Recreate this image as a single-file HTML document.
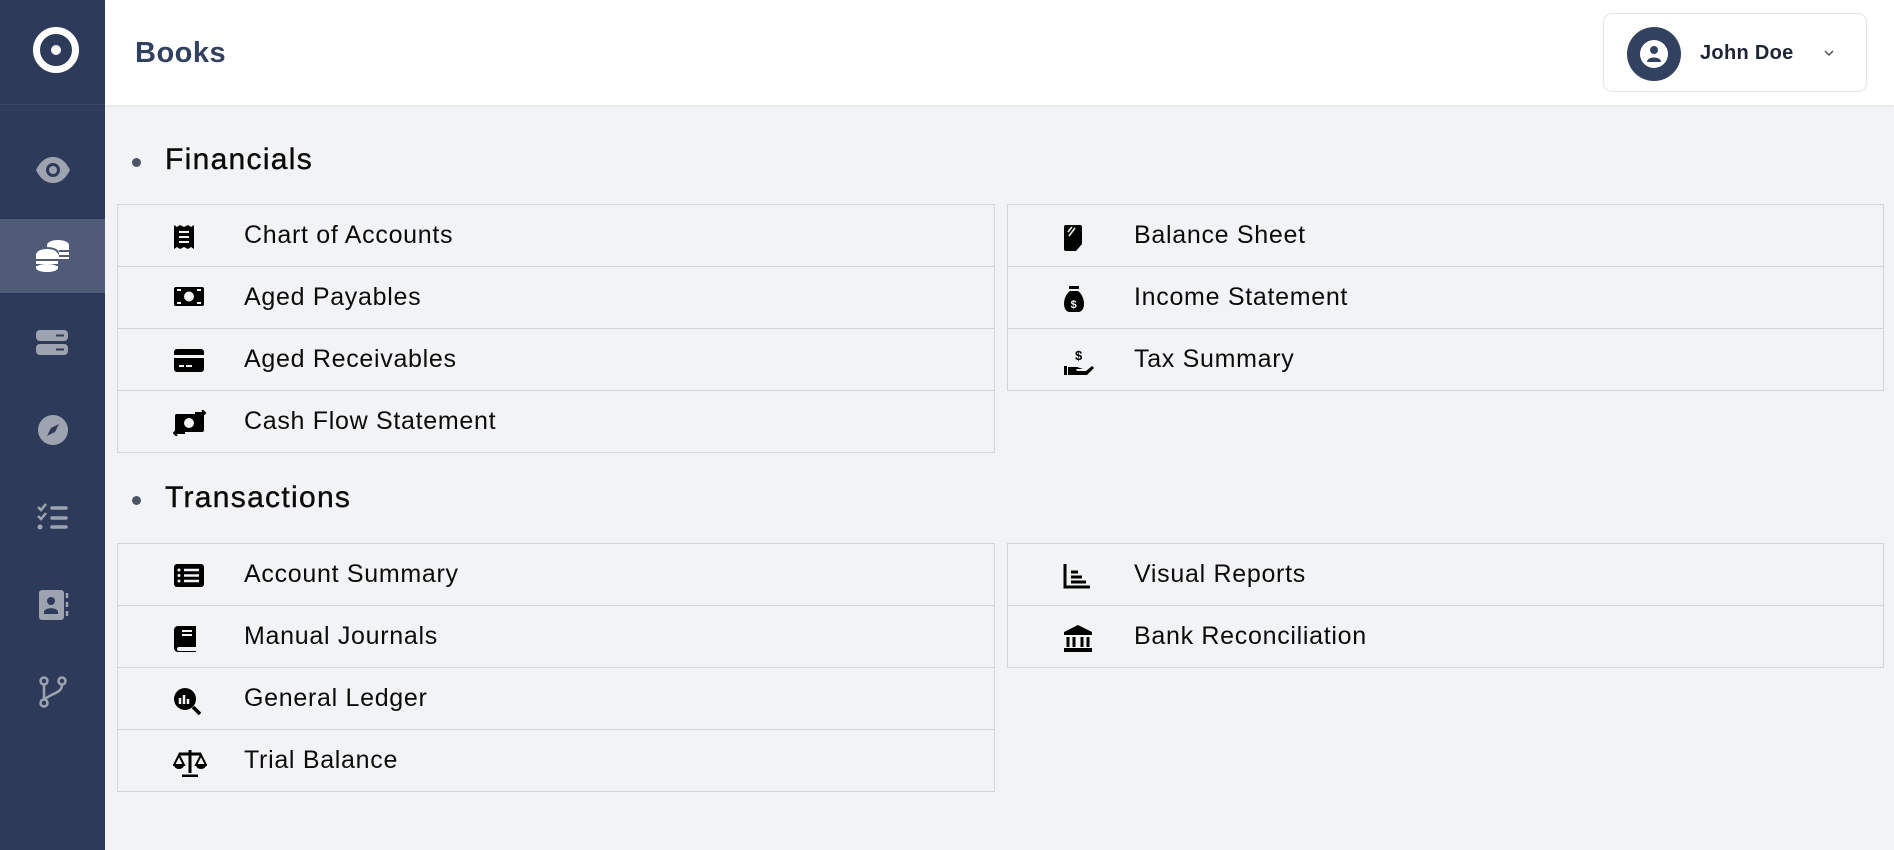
<!DOCTYPE html>
<html><head><meta charset="utf-8"><style>
*{margin:0;padding:0;box-sizing:border-box}
body{width:1894px;height:850px;background:#f2f3f5;font-family:"Liberation Sans",sans-serif;position:relative;overflow:hidden;color:#0b0b0b}
#side{position:absolute;left:0;top:0;width:105px;height:850px;background:#2e3a59}
#side .logo{position:absolute;left:0;top:0;width:105px;height:105px;border-bottom:1px solid #3f4a68}
#side .act{position:absolute;left:0;top:219px;width:105px;height:74px;background:#505b78}
#side svg{position:absolute}
#head{position:absolute;left:105px;top:0;right:0;height:105px;background:#fff;box-shadow:0 1px 3px rgba(0,0,0,.08)}
#head h1{position:absolute;left:30px;top:37px;font-size:29px;font-weight:bold;color:#334160;letter-spacing:.5px}
.user{position:absolute;left:1498px;top:13px;width:264px;height:79px;border:1px solid #e3e5ea;border-radius:9px}
.av{position:absolute;left:23px;top:13px;width:54px;height:54px;border-radius:50%;background:#334160}
.user .nm{position:absolute;left:96px;top:28px;font-size:20px;font-weight:bold;color:#1d2433;letter-spacing:.3px}
.sec{position:absolute;left:136px;font-size:30px;letter-spacing:1.3px;-webkit-text-stroke:.4px #0b0b0b}
.sec:before{content:"";position:absolute;left:-4px;top:15px;width:9px;height:9px;border-radius:50%;background:#4b5568}
.sec span{position:absolute;left:29px;top:0;white-space:nowrap}
.row{position:absolute;height:63px;border:1px solid #d4d5db;background:#f2f3f5;font-size:25px;letter-spacing:.7px}
.row .t{position:absolute;top:16px;white-space:nowrap}
.row svg{position:absolute;top:19px}
.L{left:117px;width:878px}.L .t{left:126px}.L svg{left:55px}
.R{left:1007px;width:877px}.R .t{left:126px}.R svg{left:55px}
</style></head><body>
<div id="side">
<div class="logo"><svg style="left:33px;top:27px" width="46" height="46" viewBox="0 0 46 46"><circle cx="23" cy="23" r="19.5" fill="none" stroke="#fff" stroke-width="7"/><circle cx="23" cy="23" r="5" fill="#fff"/></svg></div>
<svg style="left:35px;top:155px" width="36" height="30" viewBox="0 0 36 30"><path d="M1 15C6 5 12 2 18 2s12 3 17 13c-5 10-11 13-17 13S6 25 1 15z" fill="#9ea3b0"/><circle cx="18" cy="15" r="7" fill="#2e3a59"/><circle cx="18" cy="15" r="4" fill="#9ea3b0"/></svg>
<div class="act"></div>
<svg style="left:36px;top:239px" width="34" height="34" viewBox="0 0 34 34"><ellipse cx="22" cy="6" rx="11" ry="5" fill="#fff"/><rect x="11" y="6" width="22" height="14" fill="#fff"/><path d="M23 12h10M23 17h10" stroke="#505b78" stroke-width="2"/><ellipse cx="11" cy="14" rx="11" ry="5" fill="#fff" stroke="#505b78" stroke-width="2"/><rect x="0" y="14" width="22" height="14" fill="#fff"/><path d="M0 21h22M0 26h22" stroke="#505b78" stroke-width="2"/><ellipse cx="11" cy="29" rx="11" ry="4" fill="#fff"/></svg>
<svg style="left:36px;top:330px" width="32" height="26" viewBox="0 0 32 26"><rect x="0" y="0" width="32" height="11" rx="4" fill="#9ea3b0"/><rect x="0" y="14" width="32" height="11" rx="4" fill="#9ea3b0"/><path d="M20 5.5h8M20 19.5h8" stroke="#2e3a59" stroke-width="2"/></svg>
<svg style="left:37px;top:414px" width="32" height="32" viewBox="0 0 32 32"><circle cx="16" cy="16" r="15" fill="#9ea3b0"/><path d="M22 10l-4 8-8 4 4-8z" fill="#2e3a59"/></svg>
<svg style="left:36px;top:503px" width="32" height="28" viewBox="0 0 32 28"><path d="M2 4l3 3 5-6M2 13l3 3 5-6" stroke="#9ea3b0" stroke-width="2.5" fill="none"/><circle cx="4" cy="24" r="2.5" fill="#9ea3b0"/><path d="M16 5h14M16 15h14M16 24h14" stroke="#9ea3b0" stroke-width="3.5" stroke-linecap="round"/></svg>
<svg style="left:39px;top:589px" width="30" height="32" viewBox="0 0 30 32"><rect x="0" y="1" width="25" height="30" rx="3" fill="#9ea3b0"/><circle cx="12" cy="12" r="4" fill="#2e3a59"/><path d="M5 23c0-5 14-5 14 0v2H5z" fill="#2e3a59"/><path d="M28 4v5M28 13v5M28 22v5" stroke="#9ea3b0" stroke-width="2.5"/></svg>
<svg style="left:38px;top:676px" width="30" height="32" viewBox="0 0 30 32"><circle cx="6" cy="5" r="3.5" fill="none" stroke="#9ea3b0" stroke-width="2.5"/><circle cx="6" cy="27" r="3.5" fill="none" stroke="#9ea3b0" stroke-width="2.5"/><circle cx="24" cy="5" r="3.5" fill="none" stroke="#9ea3b0" stroke-width="2.5"/><path d="M6 9v14M24 9c0 8-10 8-17 14" stroke="#9ea3b0" stroke-width="2.5" fill="none"/></svg>
</div>
<div id="head"><h1>Books</h1>
<div class="user"><div class="av"><svg width="54" height="54" viewBox="0 0 54 54"><circle cx="27" cy="27" r="14" fill="#fff"/><circle cx="27" cy="23" r="4" fill="#334160"/><path d="M20 35c0-6 14-6 14 0" fill="#334160"/></svg></div><div class="nm">John Doe</div><svg style="position:absolute;left:219px;top:35px" width="12" height="8" viewBox="0 0 12 8"><path d="M2 2l4 4 4-4" stroke="#555" stroke-width="1.5" fill="none"/></svg></div></div>

<div class="sec" style="top:143px"><span>Financials</span></div>
<div class="row L" style="top:204px"><svg width="22" height="26" viewBox="0 0 22 26"><path d="M1 1l3 2 3-2 4 2 4-2 3 2 3-2v24l-3-2-3 2-4-2-4 2-3-2-3 2z" fill="#000"/><path d="M6 8h10M6 13h10M6 18h10" stroke="#f2f3f5" stroke-width="2"/></svg><span class="t">Chart of Accounts</span></div>
<div class="row L" style="top:266px"><svg width="32" height="22" viewBox="0 0 32 22"><rect x="1" y="1" width="30" height="19" rx="2" fill="#000"/><circle cx="16" cy="10.5" r="5" fill="#f2f3f5"/><path d="M4 4h4M24 4h4M4 17h4M24 17h4" stroke="#f2f3f5" stroke-width="2"/></svg><span class="t">Aged Payables</span></div>
<div class="row L" style="top:328px"><svg width="32" height="26" viewBox="0 0 32 26"><rect x="1" y="1" width="30" height="23" rx="3" fill="#000"/><rect x="1" y="7" width="30" height="3" fill="#f2f3f5"/><path d="M6 18h5M13 18h6" stroke="#f2f3f5" stroke-width="2"/></svg><span class="t">Aged Receivables</span></div>
<div class="row L" style="top:390px"><svg width="34" height="26" viewBox="0 0 34 26"><rect x="2" y="4" width="29" height="18" rx="2" fill="#000"/><circle cx="16" cy="13" r="5" fill="#f2f3f5"/><path d="M22 3h10M29 0l3 3-3 3M12 23H1M4 20l-3 3 3 3" stroke="#000" stroke-width="2" fill="none"/></svg><span class="t">Cash Flow Statement</span></div>
<div class="row R" style="top:204px"><svg width="22" height="28" viewBox="0 0 22 28"><path d="M3 1h14a2 2 0 012 2v17l-6 7H3a2 2 0 01-2-2V3a2 2 0 012-2z" fill="#000"/><path d="M5 8l4-5M6 12l6-8" stroke="#f2f3f5" stroke-width="1.5"/></svg><span class="t">Balance Sheet</span></div>
<div class="row R" style="top:266px"><svg width="22" height="28" viewBox="0 0 22 28"><rect x="6" y="0" width="10" height="3" fill="#000"/><path d="M7 5h8c8 6 8 21 0 21H7c-8 0-8-15 0-21z" fill="#000"/><text x="11" y="22" font-size="11" font-weight="bold" fill="#f2f3f5" text-anchor="middle" font-family="Liberation Sans">$</text></svg><span class="t">Income Statement</span></div>
<div class="row R" style="top:328px"><svg width="32" height="28" viewBox="0 0 32 28"><text x="16" y="12" font-size="13" font-weight="bold" fill="#000" text-anchor="middle" font-family="Liberation Sans">$</text><path d="M1 18h3v9H1zM5 19h9l6 2h-7l1 2h9l6-5 2 2-7 7H5z" fill="#000"/></svg><span class="t">Tax Summary</span></div>

<div class="sec" style="top:481px"><span>Transactions</span></div>
<div class="row L" style="top:543px"><svg width="32" height="26" viewBox="0 0 32 26"><rect x="1" y="1" width="30" height="23" rx="3" fill="#000"/><path d="M11 7h15M11 12.5h15M11 18h15" stroke="#f2f3f5" stroke-width="2.5"/><circle cx="6" cy="7" r="1.5" fill="#f2f3f5"/><circle cx="6" cy="12.5" r="1.5" fill="#f2f3f5"/><circle cx="6" cy="18" r="1.5" fill="#f2f3f5"/></svg><span class="t">Account Summary</span></div>
<div class="row L" style="top:605px"><svg width="26" height="28" viewBox="0 0 26 28"><path d="M5 1h18v21H6a2 2 0 000 4h17v1H5a4 4 0 01-4-4V5a4 4 0 014-4z" fill="#000"/><path d="M9 6h10M9 10h10" stroke="#f2f3f5" stroke-width="2"/></svg><span class="t">Manual Journals</span></div>
<div class="row L" style="top:667px"><svg width="30" height="30" viewBox="0 0 30 30"><circle cx="12" cy="12" r="11" fill="#000"/><path d="M20 20l7 7" stroke="#000" stroke-width="3.5"/><path d="M7 11v6M11 8v9M15 12v5" stroke="#f2f3f5" stroke-width="2.5"/></svg><span class="t">General Ledger</span></div>
<div class="row L" style="top:729px"><svg width="34" height="28" viewBox="0 0 34 28"><path d="M17 1v23M6 5h22M9 27h16" stroke="#000" stroke-width="3"/><path d="M6 6L1 16h10zM28 6l-5 10h10z" fill="none" stroke="#000" stroke-width="2"/><path d="M1 16h10a5 4 0 01-10 0zM23 16h10a5 4 0 01-10 0z" fill="#000"/></svg><span class="t">Trial Balance</span></div>
<div class="row R" style="top:543px"><svg width="28" height="26" viewBox="0 0 28 26"><path d="M2 1v23h25" stroke="#000" stroke-width="3" fill="none"/><path d="M8 9h7M8 14h11M8 19h15" stroke="#000" stroke-width="3"/></svg><span class="t">Visual Reports</span></div>
<div class="row R" style="top:605px"><svg width="30" height="28" viewBox="0 0 30 28"><path d="M15 0L1 7v3h28V7z" fill="#000"/><path d="M5 12v10M11 12v10M19 12v10M25 12v10" stroke="#000" stroke-width="3"/><rect x="1" y="23" width="28" height="4" fill="#000"/></svg><span class="t">Bank Reconciliation</span></div>
</body></html>
